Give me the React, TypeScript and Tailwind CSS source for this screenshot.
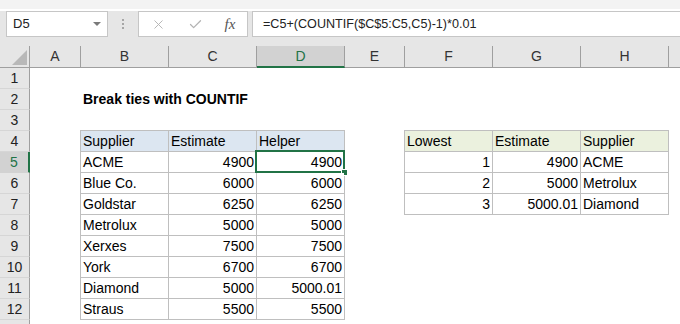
import React from 'react';
import { X, Check } from 'lucide-react';

const FONT = { fontFamily: '"Liberation Sans", Arial, sans-serif' };

const columns = [
  { label: 'A', cls: 'w-[51px]' },
  { label: 'B', cls: 'w-[88px]' },
  { label: 'C', cls: 'w-[88px]' },
  { label: 'D', cls: 'w-[88px]' },
  { label: 'E', cls: 'w-[60px]' },
  { label: 'F', cls: 'w-[88px]' },
  { label: 'G', cls: 'w-[88px]' },
  { label: 'H', cls: 'w-[88px]' },
];

const suppliers: [string, string, string][] = [
  ['ACME', '4900', '4900'],
  ['Blue Co.', '6000', '6000'],
  ['Goldstar', '6250', '6250'],
  ['Metrolux', '5000', '5000'],
  ['Xerxes', '7500', '7500'],
  ['York', '6700', '6700'],
  ['Diamond', '5000', '5000.01'],
  ['Straus', '5500', '5500'],
];

const lowest: [string, string, string][] = [
  ['1', '4900', 'ACME'],
  ['2', '5000', 'Metrolux'],
  ['3', '5000.01', 'Diamond'],
];

const Cell: React.FC<{ right?: boolean; fill?: string; children?: React.ReactNode; selected?: boolean }> = ({
  right,
  fill = 'bg-white',
  children,
  selected,
}) => (
  <div
    className={`relative h-[20px] leading-[21px] px-[2px] text-[14px] text-black whitespace-nowrap ${fill} ${
      right ? 'text-right' : 'text-left'
    }`}
  >
    {children}
    {selected && (
      <>
        <div className="absolute -left-[2px] -top-[2px] -right-[1px] -bottom-[1px] border-2 border-[#217346]" />
        <div className="absolute -right-[4px] -bottom-[4px] w-[7px] h-[7px] bg-[#217346] border border-white" />
      </>
    )}
  </div>
);

export default function App() {
  return (
    <div className="w-[680px] h-[324px] overflow-hidden bg-white" style={FONT}>
      {/* Ribbon edge */}
      <div className="h-[9px] bg-[#f3f3f3]" />

      <div className="bg-[#e6e6e6]">
        {/* Formula bar */}
        <div className="flex items-stretch h-[26px] mt-[2px]">
          <div className="ml-[6px] w-[102px] bg-white border border-[#c6c6c6] flex items-center pl-[6px] pr-[6px]">
            <span className="flex-1 text-[13px] text-[#222]">D5</span>
            <span className="w-0 h-0 border-l-[4px] border-r-[4px] border-t-[4px] border-l-transparent border-r-transparent border-t-[#7a7a7a]" />
          </div>
          <div className="w-[30px] flex flex-col items-center justify-center gap-[2px]">
            <span className="w-[2px] h-[2px] bg-[#a6a6a6]" />
            <span className="w-[2px] h-[2px] bg-[#a6a6a6]" />
            <span className="w-[2px] h-[2px] bg-[#a6a6a6]" />
          </div>
          <div className="w-[110px] bg-white border border-[#c6c6c6] flex items-center">
            <div className="w-[38px] flex justify-center">
              <X className="w-[15px] h-[15px] text-[#b3b3b3]" strokeWidth={1.5} />
            </div>
            <div className="w-[36px] flex justify-center">
              <Check className="w-[15px] h-[15px] text-[#b3b3b3]" strokeWidth={2} />
            </div>
            <div className="flex-1 flex justify-center">
              <span className="text-[15px] italic text-[#555]" style={{ fontFamily: '"Liberation Serif", serif' }}>
                fx
              </span>
            </div>
          </div>
          <div className="ml-[4px] flex-1 bg-white border-y border-l border-[#c6c6c6] flex items-center pl-[10px]">
            <span className="text-[12.6px] text-[#222] whitespace-nowrap">=C5+(COUNTIF($C$5:C5,C5)-1)*0.01</span>
          </div>
        </div>

        {/* Column headers */}
        <div className="flex h-[22px] mt-[9px]">
          <div className="w-[30px] border-r border-b border-[#9f9f9f] flex items-end justify-end pr-[2px] pb-[2px]">
            <svg width="15" height="15" viewBox="0 0 15 15">
              <polygon points="15,0 15,15 0,15" fill="#b8b8b8" />
            </svg>
          </div>
          {columns.map((c) =>
            c.label === 'D' ? (
              <div
                key={c.label}
                className={`${c.cls} shrink-0 bg-[#d2d2d2] border-r border-r-[#9f9f9f] border-b-2 border-b-[#217346] text-[14px] text-[#217346] flex items-center justify-center`}
              >
                {c.label}
              </div>
            ) : (
              <div
                key={c.label}
                className={`${c.cls} shrink-0 border-r border-b border-[#9f9f9f] text-[14px] text-[#333] flex items-center justify-center`}
              >
                {c.label}
              </div>
            )
          )}
          <div className="flex-1 border-b border-[#9f9f9f]" />
        </div>
      </div>

      {/* Sheet body */}
      <div className="flex">
        <div className="w-[30px] shrink-0 bg-[#e6e6e6]">
          {Array.from({ length: 12 }, (_, i) => i + 1).map((n) =>
            n === 5 ? (
              <div
                key={n}
                className="h-[21px] bg-[#d2d2d2] border-b border-b-[#d2d2d2] border-r-2 border-r-[#217346] text-[14px] text-[#217346] flex items-center justify-center"
              >
                {n}
              </div>
            ) : (
              <div
                key={n}
                className="h-[21px] border-b border-b-[#d6d6d6] border-r border-r-[#9f9f9f] text-[14px] text-[#222] flex items-center justify-center"
              >
                {n}
              </div>
            )
          )}
          <div className="h-[21px] border-r border-r-[#9f9f9f]" />
        </div>

        <div className="flex-1">
          <div className="h-[21px]" />
          <div className="h-[21px] pl-[53px] flex items-center">
            <span className="text-[14px] font-bold text-black">Break ties with COUNTIF</span>
          </div>
          <div className="h-[20px]" />

          <div className="flex">
            <div className="w-[50px] shrink-0" />
            <div className="grid grid-cols-[87px_87px_87px] gap-px p-px bg-[#bfbfbf]">
              <Cell fill="bg-[#dce6f1]">Supplier</Cell>
              <Cell fill="bg-[#dce6f1]">Estimate</Cell>
              <Cell fill="bg-[#dce6f1]">Helper</Cell>
              {suppliers.map(([s, e, h], i) => (
                <React.Fragment key={s}>
                  <Cell>{s}</Cell>
                  <Cell right>{e}</Cell>
                  <Cell right selected={i === 0}>
                    {h}
                  </Cell>
                </React.Fragment>
              ))}
            </div>
            <div className="w-[59px] shrink-0" />
            <div className="self-start grid grid-cols-[87px_87px_87px] gap-px p-px bg-[#bfbfbf]">
              <Cell fill="bg-[#ebf1de]">Lowest</Cell>
              <Cell fill="bg-[#ebf1de]">Estimate</Cell>
              <Cell fill="bg-[#ebf1de]">Supplier</Cell>
              {lowest.map(([n, e, s]) => (
                <React.Fragment key={n}>
                  <Cell right>{n}</Cell>
                  <Cell right>{e}</Cell>
                  <Cell>{s}</Cell>
                </React.Fragment>
              ))}
            </div>
          </div>
        </div>
      </div>
    </div>
  );
}
